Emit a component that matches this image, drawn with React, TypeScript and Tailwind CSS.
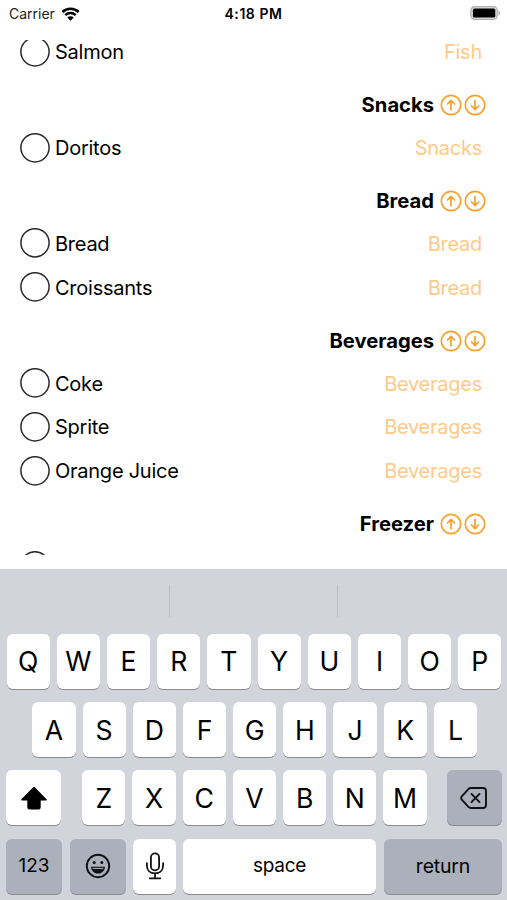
import type { ReactNode } from "react";

type Section = {
  title?: string;
  category: string;
  items: string[];
};

const sections: Section[] = [
  { category: "Fish", items: ["Salmon"] },
  { title: "Snacks", category: "Snacks", items: ["Doritos"] },
  { title: "Bread", category: "Bread", items: ["Bread", "Croissants"] },
  { title: "Beverages", category: "Beverages", items: ["Coke", "Sprite", "Orange Juice"] },
  { title: "Freezer", category: "", items: [""] },
];

function WifiIcon() {
  return (
    <svg width="19" height="14" viewBox="0 0 18 14" fill="none" stroke="black" strokeWidth="2.5">
      <path d="M0.9 5C5.3 0.6 12.7 0.6 17.1 5" />
      <path d="M3.8 8.2C6.7 5.4 11.3 5.4 14.2 8.2" />
      <path d="M9 13.8L5.8 10.4C7.6 8.8 10.4 8.8 12.2 10.4Z" fill="black" stroke="none" />
    </svg>
  );
}

function BatteryIcon() {
  return (
    <svg width="31" height="14" viewBox="0 0 31 14">
      <rect x="0.9" y="0.6" width="26.4" height="12.8" rx="3.8" fill="#dcdcdc" stroke="#b0b0b0" strokeWidth="1.2" />
      <rect x="2.9" y="2.5" width="22.4" height="9" rx="1.5" fill="black" />
      <path d="M28.6 4.8C30.6 5.6 30.6 8.6 28.6 9.4Z" fill="#a9a9a9" />
    </svg>
  );
}

function ArrowCircle({ down }: { down?: boolean }) {
  return (
    <svg
      className={down ? "rotate-180" : ""}
      width="22"
      height="22"
      viewBox="0 0 22 22"
      fill="none"
      stroke="#f9a02c"
      strokeWidth="1.7"
      strokeLinecap="round"
      strokeLinejoin="round"
    >
      <circle cx="11" cy="11" r="9.7" />
      <path d="M11 15.7V6.6M7.5 10L11 6.4L14.5 10" />
    </svg>
  );
}

function Key({ children, className = "" }: { children: ReactNode; className?: string }) {
  return (
    <div
      className={`flex h-[55px] items-center justify-center rounded-[6px] shadow-[0_1px_0_#898b90] ${className}`}
    >
      {children}
    </div>
  );
}

function LetterKeys({ letters }: { letters: string }) {
  return (
    <div className="flex gap-[7px]">
      {letters.split("").map((letter) => (
        <Key key={letter} className="w-[43.2px] bg-white pt-[2px] text-[26.6px] font-[385]">
          {letter}
        </Key>
      ))}
    </div>
  );
}

function Keyboard() {
  return (
    <div className="h-[331px] bg-[#d1d4db]">
      {/* Suggestions */}
      <div className="flex h-[64.7px] pt-4">
        <div className="h-8 w-[169.5px] border-r border-[#bcbfc4]" />
        <div className="h-8 w-[168.5px] border-r border-[#bcbfc4]" />
      </div>

      <div className="flex flex-col gap-[13.4px] pr-[5px] pl-[6px]">
        <div className="flex justify-center">
          <LetterKeys letters="QWERTYUIOP" />
        </div>
        <div className="flex justify-center pl-[1.4px]">
          <LetterKeys letters="ASDFGHJKL" />
        </div>
        <div className="flex justify-between">
          <Key className="w-[55px] bg-white">
            <svg width="28" height="24" viewBox="0 0 28 24" fill="black" stroke="black" strokeWidth="1.4" strokeLinejoin="round">
              <path d="M14 1.6L26.1 13.8H20V21.4Q20 22.8 18.6 22.8H9.4Q8 22.8 8 21.4V13.8H1.9Z" />
            </svg>
          </Key>
          <div className="pl-[0.8px]">
            <LetterKeys letters="ZXCVBNM" />
          </div>
          <Key className="w-[55px] bg-[#abb0bb]">
            <svg width="28" height="24" viewBox="0 0 28 24" fill="none" stroke="#101114" strokeWidth="1.9" strokeLinecap="round" strokeLinejoin="round">
              <path d="M11 2H23Q26 2 26 5V19Q26 22 23 22H11Q9.5 22 8.4 20.9L1.8 13.7Q0.6 12 1.8 10.3L8.4 3.1Q9.5 2 11 2Z" />
              <path d="M11.5 7.9L19.5 16.1M19.5 7.9L11.5 16.1" />
            </svg>
          </Key>
        </div>
        <div className="flex">
          <Key className="w-[56px] bg-[#abb0bb] text-[19px] font-[380]">123</Key>
          <Key className="ml-2 w-[56px] bg-[#abb0bb]">
            <svg width="26" height="26" viewBox="0 0 26 26" fill="none" stroke="#101114" strokeWidth="1.9">
              <circle cx="13" cy="13" r="11.2" />
              <circle cx="9.2" cy="9.4" r="1.5" fill="#101114" stroke="none" />
              <circle cx="16.8" cy="9.4" r="1.5" fill="#101114" stroke="none" />
              <path d="M6 13.7H20C19.6 18 16.8 20.6 13 20.6S6.4 18 6 13.7Z" fill="#101114" stroke="none" />
              <path d="M7.7 15.4H18.3" stroke="#abb0bb" strokeWidth="1.1" />
            </svg>
          </Key>
          <Key className="ml-[7px] w-[43px] bg-white">
            <svg width="20" height="28" viewBox="0 0 20 28" fill="none" stroke="#101114" strokeWidth="1.8" strokeLinecap="round">
              <rect x="5.9" y="1.4" width="8.2" height="17" rx="4.1" />
              <path d="M1.9 11.2V13.6C1.9 18.7 5.3 21.4 10 21.4S18.1 18.7 18.1 13.6V11.2M10 21.4V26.3M4.7 26.3H15.3" />
            </svg>
          </Key>
          <Key className="ml-[7px] w-[193px] bg-white text-[19px] font-[380] tracking-[-0.3px]">space</Key>
          <Key className="ml-2 w-[118px] bg-[#abb0bb] pt-px text-[19.5px] font-[380] tracking-[-0.2px]">return</Key>
        </div>
      </div>
    </div>
  );
}

export default function App() {
  return (
    <div className="flex h-[900px] w-[507px] flex-col overflow-hidden bg-white font-['Inter',sans-serif] text-black">
      {/* Status bar */}
      <div className="grid h-10 grid-cols-3 items-start pt-[6px] pr-[6px] pl-[9px]">
        <div className="flex items-center gap-[6px] text-[14px] leading-4 text-[#222]">
          <span>Carrier</span>
          <WifiIcon />
        </div>
        <div className="pr-[3px] text-center text-[14px] leading-4 font-semibold tracking-[0.55px]">4:18 PM</div>
        <div className="flex justify-end">
          <BatteryIcon />
        </div>
      </div>

      {/* Grocery list, scrolled part way */}
      <div className="h-[515px] overflow-hidden">
        <div className="-mt-[10px] text-[20px]">
          {sections.map((section) => (
            <div key={section.category}>
              {section.title && (
                <div className="flex h-[52px] items-center justify-end gap-[2px] pt-[11px] pr-[21px]">
                  <span className="mr-1 text-[20.2px] font-bold">{section.title}</span>
                  <ArrowCircle />
                  <ArrowCircle down />
                </div>
              )}
              {section.items.map((item) => (
                <div key={item} className="flex h-[43.8px] items-center pr-[25px] pl-5">
                  <svg width="30" height="30" viewBox="0 0 30 30" fill="none" stroke="#2b2b2b" strokeWidth="1.5">
                    <circle cx="15" cy="14.8" r="14.1" />
                  </svg>
                  <span className="ml-[5px] pt-px tracking-[-0.25px]">{item}</span>
                  <span className="ml-auto pt-px tracking-[-0.25px] text-[#ffca87]">{section.category}</span>
                </div>
              ))}
            </div>
          ))}
        </div>
      </div>

      <div className="h-[14px] shrink-0" />
      <Keyboard />
    </div>
  );
}
